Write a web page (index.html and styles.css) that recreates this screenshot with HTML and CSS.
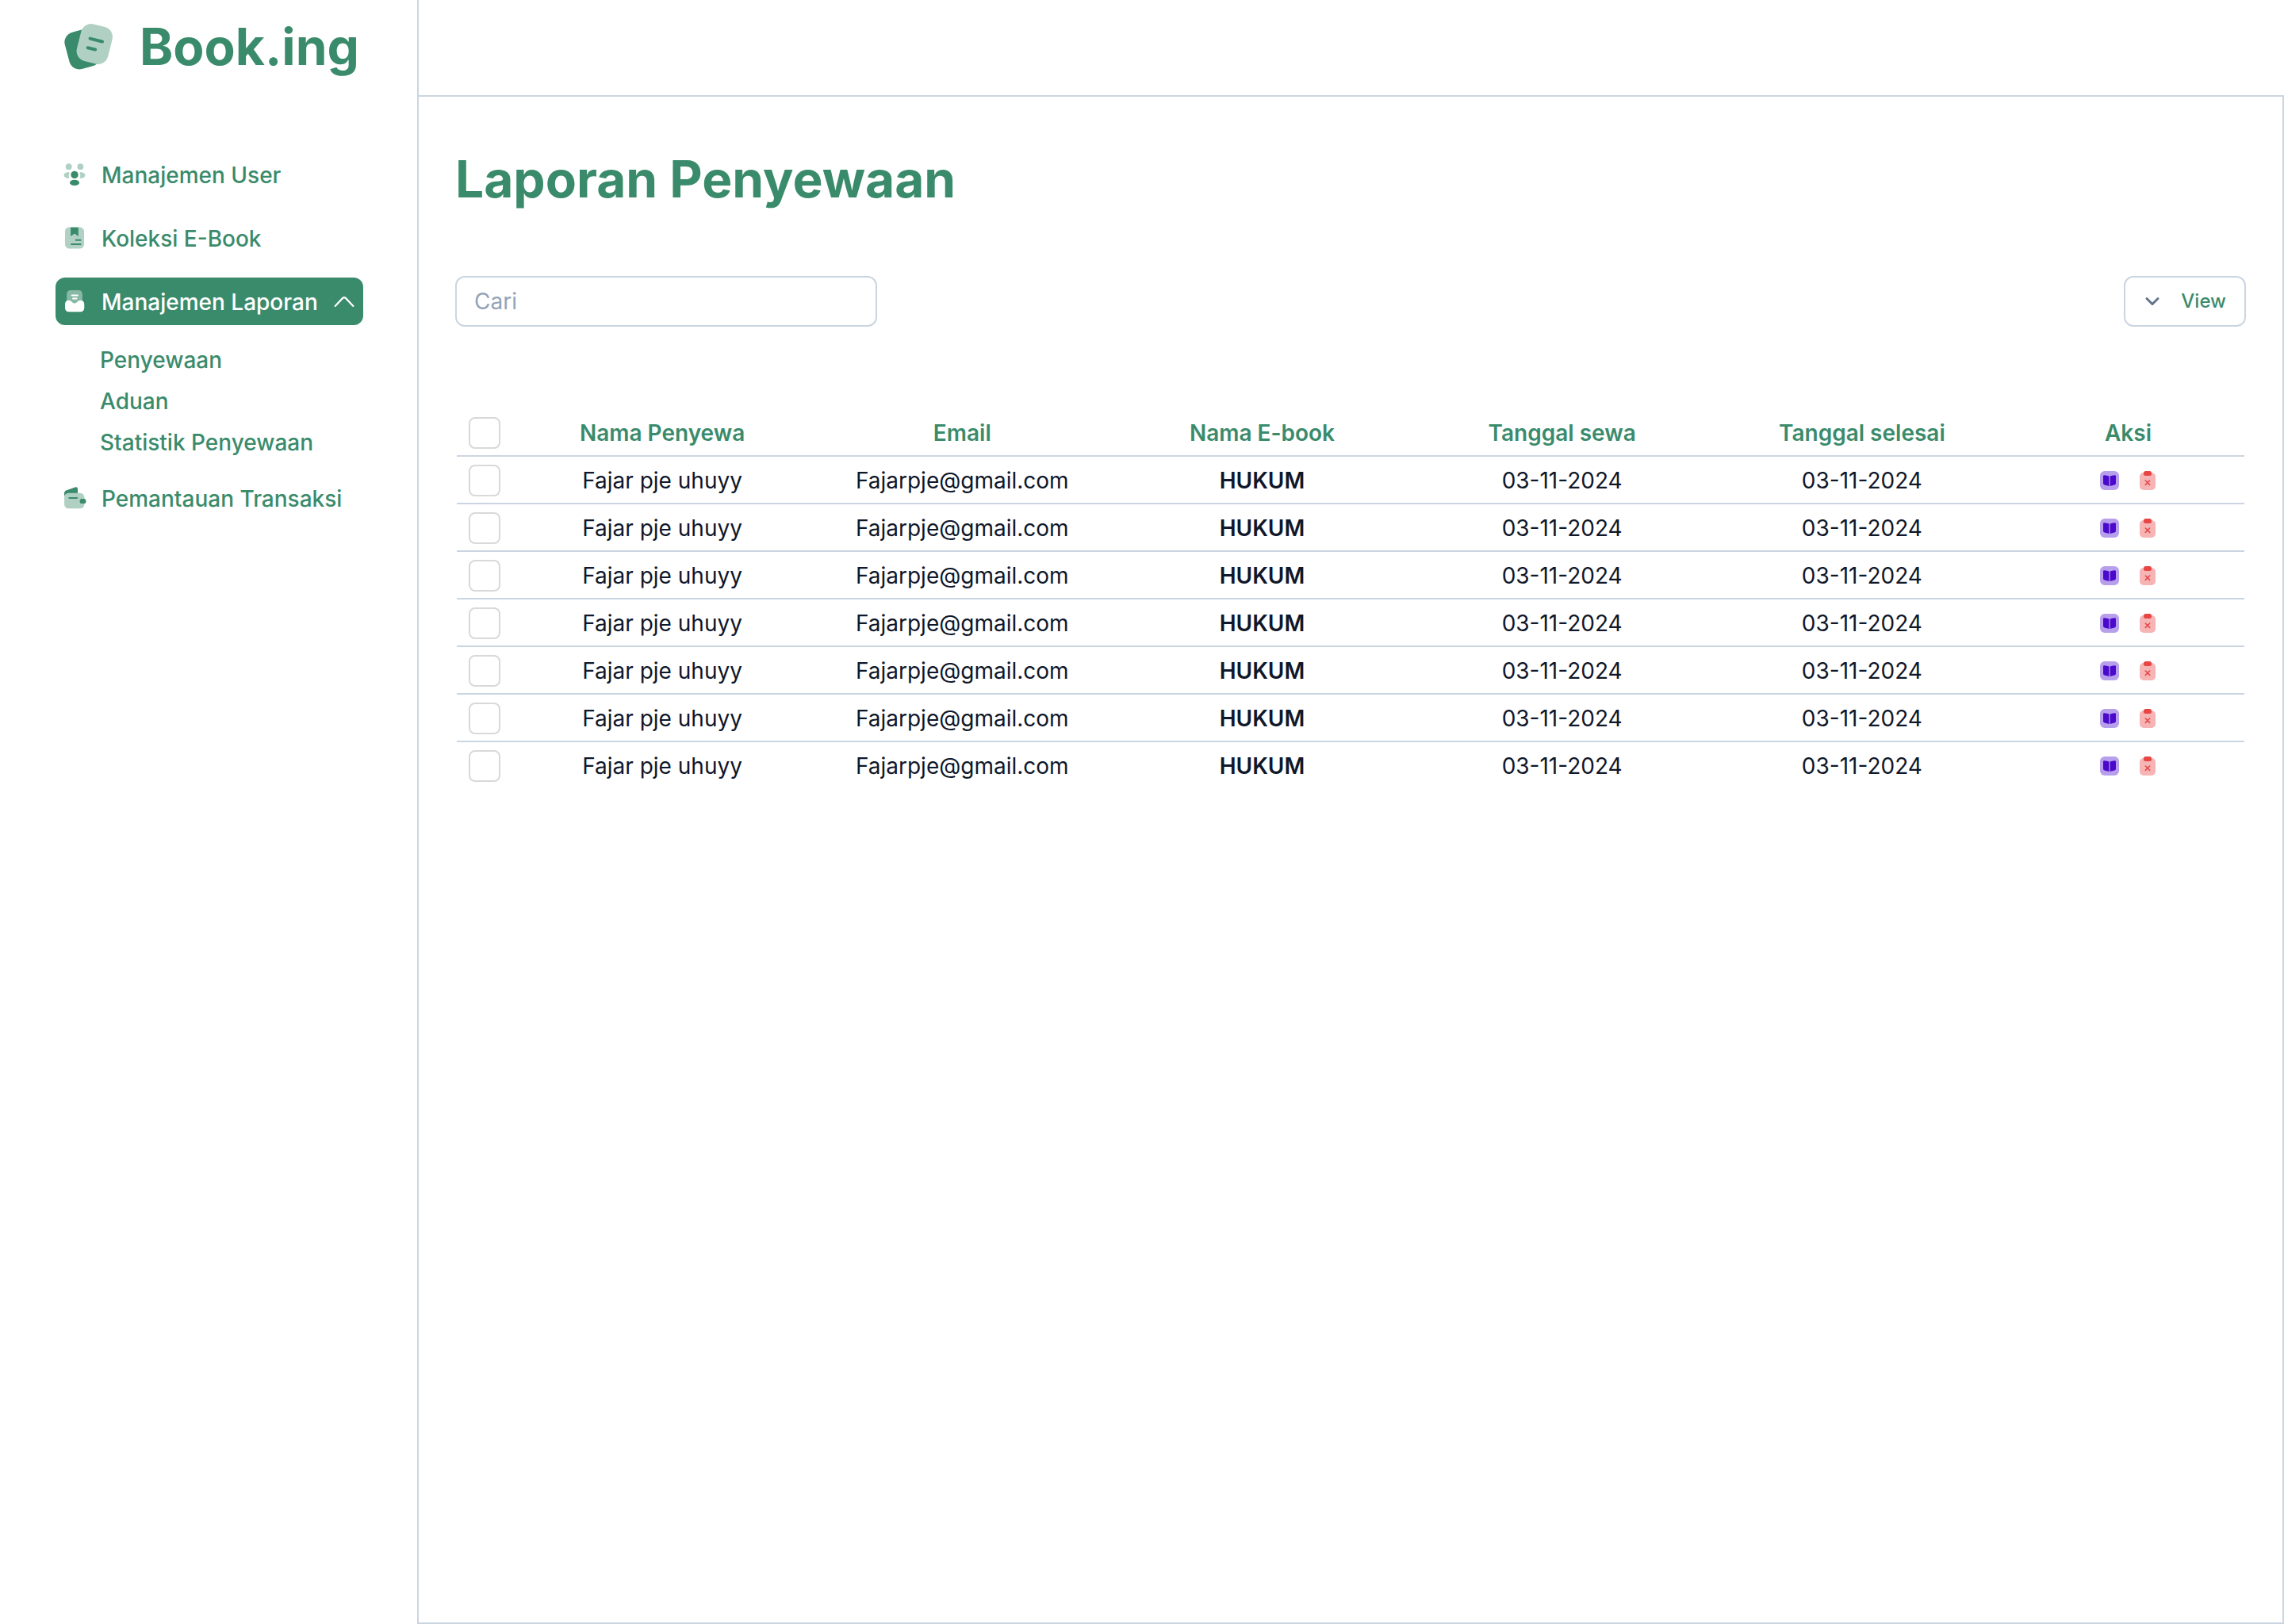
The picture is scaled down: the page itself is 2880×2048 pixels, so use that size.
FILE: index.html
```html
<!DOCTYPE html>
<html lang="id">
<head>
  <meta charset="utf-8">
  <meta name="viewport" content="width=device-width, initial-scale=1">
  <title>Book.ing - Laporan Penyewaan</title>
  <link rel="stylesheet" href="styles.css">
</head>
<body>
  <svg class="sprite" aria-hidden="true">
    <symbol id="icon-book" viewBox="0 0 24 24">
      <rect width="24" height="24" rx="6" fill="#b89fec"/>
      <path d="M11.4 6.6v12.3L5.600 17.500Q4 17 4 15.500V6.600Q4 5 5.600 5.200Q9 5.400 11.400 6.600ZM12.600 6.600v12.300L18.400 17.500Q20 17 20 15.500V6.600Q20 5 18.400 5.200Q15 5.400 12.600 6.600Z" fill="#4b0acb"/>
    </symbol>
    <symbol id="icon-delete" viewBox="0 0 24 24">
      <rect x="2" y="2" width="20" height="22" rx="5" fill="#f6b4b4"/>
      <rect x="7" y="0" width="10" height="6" rx="2.500" fill="#e84545"/>
      <path d="M9.300 12l5.400 5.400M14.700 12l-5.400 5.400" fill="none" stroke="#e84545" stroke-width="1.500" stroke-linecap="round"/>
    </symbol>
  </svg>
  <div class="app">
    <aside class="sidebar">
      <a class="brand" href="#">
        <svg class="brand-logo" viewBox="0 0 64 64" aria-hidden="true">
          <rect x="4" y="10" width="40" height="48" rx="13" transform="rotate(-15 24 34)" fill="#3a8b6b"/>
          <rect x="19" y="3.500" width="40.500" height="48" rx="13" transform="rotate(14 39.300 27.500)" fill="#b0d0c4"/>
          <path d="M33.500 20.600l15.500 3.900M30.600 32.200l9.500 2.300" stroke="#3a8b6b" stroke-width="4" stroke-linecap="round"/>
        </svg>
        <span>Book.ing</span>
      </a>
      <nav class="menu">
        <a class="menu-item" href="#">
          <svg class="menu-icon" viewBox="0 0 24 24" aria-hidden="true">
            <g class="tint">
              <circle cx="6.500" cy="4.600" r="2.900"/><circle cx="17.500" cy="4.600" r="2.900"/>
              <path d="M7.200 10C4.300 9.800 2 10.800 2 12.700s2.200 3 4.900 2.900Q6 12.600 7.200 10ZM16.800 10c2.900-.2 5.200.8 5.200 2.700s-2.200 3-4.900 2.900Q18 12.600 16.800 10Z"/>
            </g>
            <circle cx="12" cy="12.300" r="3.500"/><ellipse cx="12" cy="19.800" rx="4.500" ry="2.700"/>
          </svg>
          <span>Manajemen User</span>
        </a>
        <a class="menu-item" href="#">
          <svg class="menu-icon" viewBox="0 0 24 24" aria-hidden="true">
            <rect class="tint" x="3" y="1.800" width="18" height="20.400" rx="4"/>
            <path d="M8.300 2h7.300v7.600q0 1-.9.400l-2.100-1.700q-.6-.5-1.200 0L9.200 10q-.9.700-.9-.4Z"/>
            <path d="M13.200 14h4.500M9 18h8.700" fill="none" stroke="currentColor" stroke-width="1.500" stroke-linecap="round"/>
          </svg>
          <span>Koleksi E-Book</span>
        </a>
        <div class="menu-group">
          <button class="menu-item menu-item-active" type="button" aria-expanded="true">
            <svg class="menu-icon" viewBox="0 0 24 24" aria-hidden="true">
              <path class="tint" d="M4.600 15V5.500q0-4 4-4h6.800q4 0 4 4V15Z"/>
              <path d="M3 15q0-3.900 3.600-3.900c2.600 0 2.800 2.700 5.400 2.700s2.800-2.700 5.400-2.700Q21.200 11.100 21.200 15v3q0 4-4 4H7q-4 0-4-4Z"/>
              <path d="M9.500 6.400h5.400M10.500 9.300h3.400" stroke="currentColor" stroke-width="1.500" stroke-linecap="round"/>
            </svg>
            <span>Manajemen Laporan</span>
            <svg class="menu-caret" viewBox="0 0 24 24" aria-hidden="true">
              <path d="M1.500 17.500L10.300 8.200q1.700-1.600 3.400 0L22.500 17.500" fill="none" stroke="currentColor" stroke-width="2" stroke-linecap="round"/>
            </svg>
          </button>
          <div class="submenu">
            <a href="#">Penyewaan</a>
            <a href="#">Aduan</a>
            <a href="#">Statistik Penyewaan</a>
          </div>
        </div>
        <a class="menu-item" href="#">
          <svg class="menu-icon" viewBox="0 0 24 24" aria-hidden="true">
            <path d="M2.300 10V7.200q0-1.700 1.700-2.300L12.500 1.900q2.500-.7 2.500 1.700V9Z"/>
            <rect class="tint-solid" x="2.300" y="7.300" width="19" height="14.700" rx="4"/>
            <rect x="17" y="12.700" width="5.800" height="4.600" rx="2"/>
            <path d="M7 12h7.300" stroke="currentColor" stroke-width="1.500" stroke-linecap="round"/>
          </svg>
          <span>Pemantauan Transaksi</span>
        </a>
      </nav>
    </aside>
    <div class="page">
      <header class="topbar"></header>
      <main class="content">
        <h1>Laporan Penyewaan</h1>
        <div class="toolbar">
          <input class="search" type="search" placeholder="Cari" aria-label="Cari">
          <button class="view-button" type="button">
            <svg class="view-caret" viewBox="0 0 24 24" aria-hidden="true">
              <path d="M5 8.500l7 7 7-7" fill="none" stroke="#64748b" stroke-width="3" stroke-linecap="round" stroke-linejoin="round"/>
            </svg>
            View
          </button>
        </div>
        <table class="report">
          <colgroup><col class="col-check"><col><col><col><col><col><col class="col-action"></colgroup>
          <thead>
            <tr><th><input type="checkbox" aria-label="Pilih semua"></th><th>Nama Penyewa</th><th>Email</th><th>Nama E-book</th><th>Tanggal sewa</th><th>Tanggal selesai</th><th>Aksi</th></tr>
          </thead>
          <tbody>
            <tr><td><input type="checkbox" aria-label="Pilih baris 1"></td><td>Fajar pje uhuyy</td><td>Fajarpje@gmail.com</td><td class="book">HUKUM</td><td>03-11-2024</td><td>03-11-2024</td><td><div class="actions"><button type="button" aria-label="Lihat"><svg><use href="#icon-book"/></svg></button><button type="button" aria-label="Hapus"><svg><use href="#icon-delete"/></svg></button></div></td></tr>
            <tr><td><input type="checkbox" aria-label="Pilih baris 2"></td><td>Fajar pje uhuyy</td><td>Fajarpje@gmail.com</td><td class="book">HUKUM</td><td>03-11-2024</td><td>03-11-2024</td><td><div class="actions"><button type="button" aria-label="Lihat"><svg><use href="#icon-book"/></svg></button><button type="button" aria-label="Hapus"><svg><use href="#icon-delete"/></svg></button></div></td></tr>
            <tr><td><input type="checkbox" aria-label="Pilih baris 3"></td><td>Fajar pje uhuyy</td><td>Fajarpje@gmail.com</td><td class="book">HUKUM</td><td>03-11-2024</td><td>03-11-2024</td><td><div class="actions"><button type="button" aria-label="Lihat"><svg><use href="#icon-book"/></svg></button><button type="button" aria-label="Hapus"><svg><use href="#icon-delete"/></svg></button></div></td></tr>
            <tr><td><input type="checkbox" aria-label="Pilih baris 4"></td><td>Fajar pje uhuyy</td><td>Fajarpje@gmail.com</td><td class="book">HUKUM</td><td>03-11-2024</td><td>03-11-2024</td><td><div class="actions"><button type="button" aria-label="Lihat"><svg><use href="#icon-book"/></svg></button><button type="button" aria-label="Hapus"><svg><use href="#icon-delete"/></svg></button></div></td></tr>
            <tr><td><input type="checkbox" aria-label="Pilih baris 5"></td><td>Fajar pje uhuyy</td><td>Fajarpje@gmail.com</td><td class="book">HUKUM</td><td>03-11-2024</td><td>03-11-2024</td><td><div class="actions"><button type="button" aria-label="Lihat"><svg><use href="#icon-book"/></svg></button><button type="button" aria-label="Hapus"><svg><use href="#icon-delete"/></svg></button></div></td></tr>
            <tr><td><input type="checkbox" aria-label="Pilih baris 6"></td><td>Fajar pje uhuyy</td><td>Fajarpje@gmail.com</td><td class="book">HUKUM</td><td>03-11-2024</td><td>03-11-2024</td><td><div class="actions"><button type="button" aria-label="Lihat"><svg><use href="#icon-book"/></svg></button><button type="button" aria-label="Hapus"><svg><use href="#icon-delete"/></svg></button></div></td></tr>
            <tr><td><input type="checkbox" aria-label="Pilih baris 7"></td><td>Fajar pje uhuyy</td><td>Fajarpje@gmail.com</td><td class="book">HUKUM</td><td>03-11-2024</td><td>03-11-2024</td><td><div class="actions"><button type="button" aria-label="Lihat"><svg><use href="#icon-book"/></svg></button><button type="button" aria-label="Hapus"><svg><use href="#icon-delete"/></svg></button></div></td></tr>
          </tbody>
        </table>
      </main>
    </div>
  </div>
</body>
</html>
```
FILE: styles.css
```css
:root {
  --green: #3a8b6b;
  --line: #cbd5e1;
  --ink: #0f172a;
}

* {
  box-sizing: border-box;
}

body {
  margin: 0;
  background: #fff;
  color: var(--ink);
  font-family: Inter, "Liberation Sans", sans-serif;
  font-size: 28px;
  line-height: 36px;
}

a {
  color: inherit;
  text-decoration: none;
}

button,
input {
  margin: 0;
  font: inherit;
}

button {
  padding: 0;
  border: 0;
  background: none;
  cursor: pointer;
}

svg {
  display: block;
  flex: none;
}

.sprite {
  display: none;
}

.app {
  display: grid;
  grid-template-columns: 526px 1fr;
  min-height: 100vh;
}

/* Sidebar */

.sidebar {
  padding: 0 68px 0 70px;
  color: var(--green);
  font-weight: 500;
}

.brand {
  display: flex;
  align-items: center;
  gap: 32px;
  height: 120px;
  padding-left: 10px;
  font-size: 64px;
  line-height: 64px;
  font-weight: 700;
}

.brand span {
  padding-bottom: 2px;
}

.brand-logo {
  width: 64px;
  height: 64px;
}

.menu {
  display: flex;
  flex-direction: column;
  gap: 20px;
  padding-top: 70px;
}

.menu-group {
  margin-bottom: -4px;
}

.menu-item {
  display: flex;
  align-items: center;
  gap: 18px;
  width: 100%;
  height: 60px;
  padding: 0 8px;
  border-radius: 12px;
  white-space: nowrap;
}

.menu-item span {
  padding-top: 2px;
}

.menu-item-active {
  background: var(--green);
  color: #fff;
}

.menu-icon {
  width: 32px;
  height: 32px;
  fill: currentColor;
}

.tint {
  opacity: 0.4;
}

.tint-solid {
  fill: #b0d0c4;
}

.menu-caret {
  width: 26px;
  height: 26px;
  margin-left: auto;
  margin-right: 3px;
}

.submenu {
  display: flex;
  flex-direction: column;
  gap: 16px;
  padding: 26px 0 6px 56px;
}

/* Page */

.page {
  display: flex;
  flex-direction: column;
  border-left: 2px solid var(--line);
}

.topbar {
  height: 120px;
}

.content {
  flex: 1;
  padding: 72px 46px;
  border: solid var(--line);
  border-width: 2px 2px 2px 0;
}

h1 {
  margin: 0 0 90px;
  color: var(--green);
  font-size: 64px;
  line-height: 64px;
  font-weight: 700;
}

.toolbar {
  display: flex;
  justify-content: space-between;
  margin-bottom: 104px;
}

.search {
  width: 532px;
  height: 64px;
  padding: 0 22px;
  border: 2px solid var(--line);
  border-radius: 12px;
  background: #fff;
  color: var(--ink);
  appearance: none;
}

.search::placeholder {
  color: #94a3b8;
  opacity: 1;
}

.view-button {
  display: flex;
  align-items: center;
  gap: 24px;
  height: 64px;
  padding: 0 23px 0 22px;
  border: 2px solid var(--line);
  border-radius: 12px;
  color: var(--green);
  font-size: 24px;
  font-weight: 500;
}

.view-caret {
  width: 24px;
  height: 24px;
}

/* Report table */

.report {
  width: calc(100% - 4px);
  margin: 0 2px;
  border-collapse: separate;
  border-spacing: 0;
  table-layout: fixed;
  text-align: center;
}

.col-check {
  width: 70px;
}

.col-action {
  width: 13%;
}

.report th,
.report td {
  height: 60px;
  padding: 2px 0 0;
  border-bottom: 2px solid var(--line);
}

.report th {
  color: var(--green);
  font-weight: 600;
}

.report tbody tr:last-child td {
  border-bottom-color: transparent;
}

.report .book {
  font-weight: 600;
}

.report input {
  display: block;
  width: 40px;
  height: 40px;
  margin: 0 auto;
  border: 2px solid #d9d9d9;
  border-radius: 8px;
  background: #fff;
  appearance: none;
}

.report input:checked {
  background: var(--green);
}

.actions {
  display: flex;
  justify-content: center;
  gap: 24px;
  padding-left: 2px;
}

.actions svg {
  width: 24px;
  height: 24px;
}
```
